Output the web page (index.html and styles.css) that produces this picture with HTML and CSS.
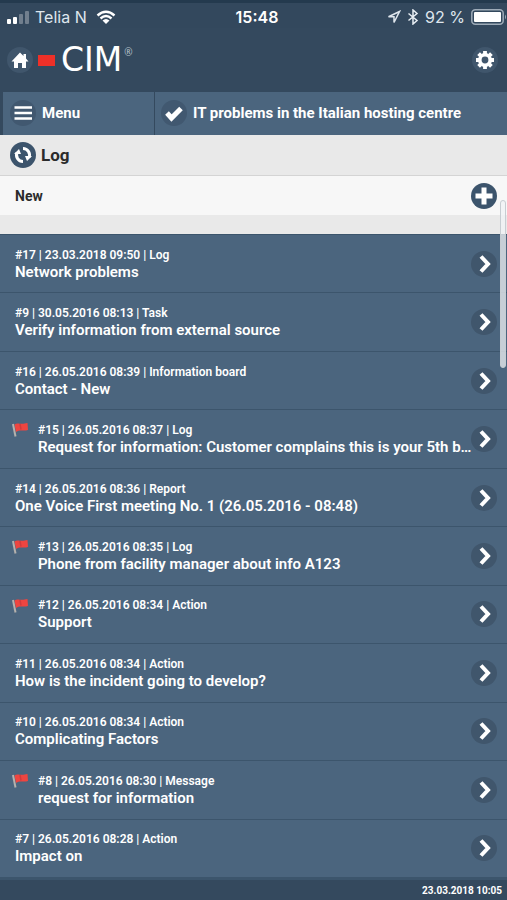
FILE: index.html
```html
<!DOCTYPE html>
<html lang="en">
<head>
<meta charset="utf-8">
<meta name="viewport" content="width=device-width, initial-scale=1">
<title>CIM Log</title>
<link rel="stylesheet" href="styles.css">
</head>
<body>
<svg class="sprites" aria-hidden="true">
  <symbol id="chevron" viewBox="0 0 26 26"><path d="M10 5.500 17 13l-7 7.500" fill="none" stroke="#fff" stroke-width="4"/></symbol>
  <symbol id="flag" viewBox="0 0 18 16"><path d="M1 2 3.500 14.500" stroke="#b5b1ad" stroke-width="2"/><path d="M2.500 2.500C6 0 8 3 15.500 1L16 8C11 9.500 8 7 4 10Z" fill="#ee4540"/><path d="M8 2 9 7.500" stroke="#d13b3d" stroke-width="1.500"/></symbol>
</svg>
<div class="status">
  <div class="status-side">
    <svg width="24" height="14" viewBox="0 0 24 14"><g fill="#fff"><rect y="9" width="4" height="5" rx="1"/><rect x="6" y="7" width="4" height="7" rx="1"/><g opacity=".3"><rect x="12" y="4" width="4" height="10" rx="1"/><rect x="18" y="1" width="4" height="13" rx="1"/></g></g></svg>
    <span class="carrier">Telia N</span>
    <svg class="wifi" width="20" height="15" viewBox="0 0 20 15"><path d="M1.500 5.500Q10-2 18.500 5.500M4.500 8.500Q10 3.500 15.500 8.500" fill="none" stroke="#fff" stroke-width="2.400"/><path d="M6.500 10.500Q10 7.500 13.500 10.500L10 14Z" fill="#fff"/></svg>
  </div>
  <span class="time">15:48</span>
  <div class="status-side status-right">
    <svg width="14" height="14" viewBox="0 0 14 14"><path d="M12.500 1.500 1.500 6.800H7V12.500Z" fill="none" stroke="#dfe6ed" stroke-width="1.500"/></svg>
    <svg width="12" height="16" viewBox="0 0 12 16"><path d="M1.500 4.500 10 11.500 6 15V1l4 3.500-8.500 7" fill="none" stroke="#e8eef3" stroke-width="1.500"/></svg>
    <span>92 %</span>
    <svg width="36" height="16" viewBox="0 0 36 16"><rect x=".8" y=".8" width="31.400" height="14.400" rx="3.500" fill="none" stroke="#9eabb8" stroke-width="1.500"/><rect x="3" y="3" width="27" height="10" rx="1" fill="#fff"/><path d="M34 5.500q2 2.500 0 5Z" fill="#9eabb8"/></svg>
  </div>
</div>
<header class="header">
  <a class="round" href="#" aria-label="Home"><svg viewBox="0 0 26 26"><path d="M4.500 14.500 13 5.500l3.500 3.500V7H19v4.500l2.500 3H19V21h-4v-5h-4v5H7v-6.500Z" fill="#fff"/></svg></a>
  <span class="brand"><span class="brand-mark"></span><span class="brand-name">CIM</span><sup class="brand-reg">®</sup></span>
  <button class="round settings" type="button" aria-label="Settings"><svg viewBox="0 0 26 26"><circle cx="13" cy="13" r="5.200" fill="none" stroke="#fff" stroke-width="3.600"/><path d="M13 4v3m0 12v3M4 13h3m12 0h3M6.600 6.600l2 2m8.800 8.800 2 2M19.400 6.600l-2 2m-8.800 8.800-2 2" stroke="#fff" stroke-width="3.800"/></svg></button>
</header>
<nav class="tabs">
  <button class="tab" type="button"><span class="round"><svg viewBox="0 0 26 26"><path d="M4.500 7.500h17.500M4.500 13h17.500M4.500 18.500h17.500" stroke="#fff" stroke-width="2.600"/></svg></span>Menu</button>
  <button class="tab" type="button"><span class="round"><svg viewBox="0 0 26 26"><path d="M6 13l4.500 5L20 8.500" fill="none" stroke="#fff" stroke-width="5"/></svg></span>IT problems in the Italian hosting centre</button>
</nav>
<main class="main">
  <div class="log-head">
    <button class="round solid" type="button" aria-label="Refresh"><svg viewBox="0 0 26 26"><path d="M13 6.500A6.500 6.500 0 0 1 19 15.500M13 19.500A6.500 6.500 0 0 1 7 10.500" fill="none" stroke="#fff" stroke-width="3"/><path d="M15 14h7l-5 5ZM11 12H4l5-5Z" fill="#fff"/></svg></button>
    <h1>Log</h1>
  </div>
  <a class="new" href="#">New<span class="round solid"><svg viewBox="0 0 26 26"><path d="M13 4.500v17M4.500 13h17" stroke="#fff" stroke-width="5"/></svg></span></a>
  <ul class="list">
    <li><a class="row" href="#"><span class="text"><span class="meta">#17 | 23.03.2018 09:50 | Log</span><span class="title">Network problems</span></span><svg class="round"><use href="#chevron"/></svg></a></li>
    <li><a class="row" href="#"><span class="text"><span class="meta">#9 | 30.05.2016 08:13 | Task</span><span class="title">Verify information from external source</span></span><svg class="round"><use href="#chevron"/></svg></a></li>
    <li><a class="row" href="#"><span class="text"><span class="meta">#16 | 26.05.2016 08:39 | Information board</span><span class="title">Contact - New</span></span><svg class="round"><use href="#chevron"/></svg></a></li>
    <li><a class="row flagged" href="#"><svg class="flag"><use href="#flag"/></svg><span class="text"><span class="meta">#15 | 26.05.2016 08:37 | Log</span><span class="title">Request for information: Customer complains this is your 5th b…</span></span><svg class="round"><use href="#chevron"/></svg></a></li>
    <li><a class="row" href="#"><span class="text"><span class="meta">#14 | 26.05.2016 08:36 | Report</span><span class="title">One Voice First meeting No. 1 (26.05.2016 - 08:48)</span></span><svg class="round"><use href="#chevron"/></svg></a></li>
    <li><a class="row flagged" href="#"><svg class="flag"><use href="#flag"/></svg><span class="text"><span class="meta">#13 | 26.05.2016 08:35 | Log</span><span class="title">Phone from facility manager about info A123</span></span><svg class="round"><use href="#chevron"/></svg></a></li>
    <li><a class="row flagged" href="#"><svg class="flag"><use href="#flag"/></svg><span class="text"><span class="meta">#12 | 26.05.2016 08:34 | Action</span><span class="title">Support</span></span><svg class="round"><use href="#chevron"/></svg></a></li>
    <li><a class="row" href="#"><span class="text"><span class="meta">#11 | 26.05.2016 08:34 | Action</span><span class="title">How is the incident going to develop?</span></span><svg class="round"><use href="#chevron"/></svg></a></li>
    <li><a class="row" href="#"><span class="text"><span class="meta">#10 | 26.05.2016 08:34 | Action</span><span class="title">Complicating Factors</span></span><svg class="round"><use href="#chevron"/></svg></a></li>
    <li><a class="row flagged" href="#"><svg class="flag"><use href="#flag"/></svg><span class="text"><span class="meta">#8 | 26.05.2016 08:30 | Message</span><span class="title">request for information</span></span><svg class="round"><use href="#chevron"/></svg></a></li>
    <li><a class="row" href="#"><span class="text"><span class="meta">#7 | 26.05.2016 08:28 | Action</span><span class="title">Impact on</span></span><svg class="round"><use href="#chevron"/></svg></a></li>
  </ul>
  <div class="scroll-thumb"></div>
</main>
<footer class="footer">23.03.2018 10:05</footer>
</body>
</html>
```
FILE: styles.css
```css
* { box-sizing: border-box; }

body {
  margin: 0;
  min-height: 100vh;
  display: flex;
  flex-direction: column;
  background: #34495e;
  color: #fff;
  font: 700 15px/20px Roboto, sans-serif;
}

a { color: inherit; text-decoration: none; }
button { border: 0; padding: 0; color: inherit; font: inherit; cursor: pointer; }
svg { display: block; flex: none; }
.sprites { position: absolute; width: 0; height: 0; }

.status {
  display: grid;
  grid-template-columns: 1fr auto 1fr;
  align-items: center;
  height: 28px;
  padding: 3px 0 0 7px;
  border-top: 3px solid #243a4e;
  background: #33485d;
  font: 400 16px/20px Inter, sans-serif;
  color: #dfe6ed;
}
.status-side { display: flex; align-items: center; gap: 5px; }
.status-right { justify-content: flex-end; gap: 6px; }
.wifi { margin-left: 4px; }
.carrier { margin-left: -1px; }
.time { font-weight: 600; color: #fff; }

.round {
  display: block;
  flex: none;
  width: 26px;
  height: 26px;
  border-radius: 50%;
  background: #40566c;
}
.round svg { width: 26px; height: 26px; }
.solid { background: #3c546c; }

.header {
  display: flex;
  align-items: center;
  height: 64px;
  padding: 0 9px 0 7px;
}
.brand { display: flex; align-items: center; margin-left: 5px; }
.brand-mark { width: 17px; height: 11px; background: #ee3028; }
.brand-name { margin-left: 6px; font: 400 33px/40px "DejaVu Sans", sans-serif; }
.brand-reg { align-self: flex-start; margin-left: 2px; font: 400 10px/24px "Open Sans", sans-serif; color: #b8c3cd; }
.settings { margin-left: auto; }

.tabs {
  display: grid;
  grid-template-columns: 151px 1fr;
  gap: 1px;
  height: 43px;
  padding-left: 3px;
}
.tab {
  display: flex;
  align-items: center;
  gap: 6px;
  padding: 0 5px 1px 7px;
  background: #4b657e;
  text-align: left;
}
.tab .round { background: #415870; }
.tab:last-child { padding-left: 6px; }

.main {
  position: relative;
  flex: 1;
  display: flex;
  flex-direction: column;
  background: #e9e9e9;
}
.log-head {
  display: flex;
  align-items: center;
  gap: 5px;
  height: 41px;
  padding-left: 10px;
  border-bottom: 1px solid #d4d4d4;
  color: #2b2b2b;
}
h1 { margin: 0; font-size: 17px; line-height: 24px; }
.new {
  display: flex;
  align-items: center;
  justify-content: space-between;
  height: 39px;
  margin-bottom: 19px;
  padding: 0 10px 0 15px;
  background: #f7f7f7;
  color: #2b2b2b;
  font-size: 14px;
}

.list {
  flex: 1;
  display: grid;
  grid-auto-rows: 1fr;
  margin: 0;
  padding: 0;
  list-style: none;
  background: #4b657e;
  border-top: 1px solid #3c556c;
}
.list li { border-bottom: 1px solid #3c556c; min-width: 0; }
.row {
  display: flex;
  align-items: center;
  height: 100%;
  min-height: 52px;
  padding: 0 10px 0 15px;
}
.text { flex: 1; min-width: 0; display: flex; flex-direction: column; padding-top: 1px; }
.meta { font-size: 12px; line-height: 16px; font-weight: 600; }
.title {
  font-size: 15px;
  line-height: 19px;
  font-weight: 600;
  white-space: nowrap;
}
.flagged { padding-left: 12px; }
.flag { align-self: flex-start; width: 18px; height: 16px; margin: 12px 8px 0 0; }

.scroll-thumb {
  position: absolute;
  top: 65px;
  right: 1px;
  width: 6px;
  height: 168px;
  border: 1px solid #c7cdd2;
  border-radius: 4px;
  background: rgba(240, 243, 245, .75);
}

.footer {
  height: 22px;
  padding: 2px 5px 0;
  border-top: 2px solid #3c556c;
  font-size: 10px;
  line-height: 17px;
  text-align: right;
}
```
